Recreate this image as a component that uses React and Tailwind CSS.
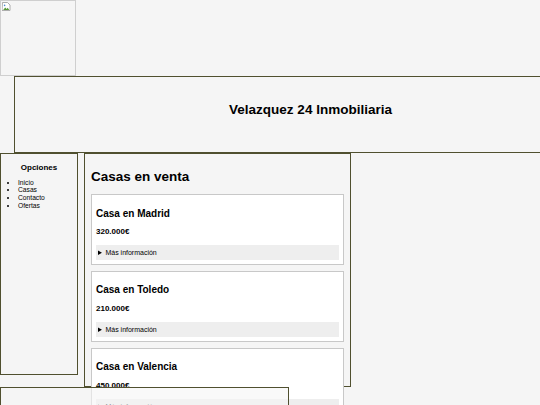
const casas = [
	{ nombre: "Casa en Madrid", precio: "320.000€" },
	{ nombre: "Casa en Toledo", precio: "210.000€" },
	{ nombre: "Casa en Valencia", precio: "450.000€" },
];

const BrokenImage = () => (
	<div className="w-[76px] h-[76px] border border-[#cfcfcf] p-[1px]">
		<svg width="9" height="9" viewBox="0 0 9 9">
			<path d="M0.5 0.5h5l2.5 2.5v5.5h-8z" fill="#fff" stroke="#9a9a9a" strokeWidth="0.8" />
			<path d="M1.2 8l2-2.6 1.5 1.6 1-1.2 1.6 2.2z" fill="#5a9a3a" />
			<circle cx="2.6" cy="3.4" r="0.8" fill="#4a8ad0" />
		</svg>
	</div>
);

const Casa = ({ nombre, precio }) => (
	<div className="bg-white border border-[#c8c8c8] px-[4px] pt-[12.7px] pb-[3.5px]">
		<h3 className="text-[10px] leading-[11.5px] font-bold text-black">{nombre}</h3>
		<p className="mt-[8px] text-[8px] leading-[9.2px] font-bold text-black">{precio}</p>
		<details className="mt-[9px] bg-[#eeeeee] h-[15px]">
			<summary className="text-[7px] leading-[15px] pl-[2px] text-black cursor-pointer">
				Más información
			</summary>
		</details>
	</div>
);

export default function App() {
	return (
		<div
			className="h-[405px] w-[540px] overflow-hidden bg-[#f5f5f5] text-black"
			style={{ fontFamily: '"Liberation Sans", Arial, sans-serif' }}>
			<BrokenImage />

			<header className="ml-[14px] w-[593px] h-[77px] border border-[#50502f] flex items-center justify-center pb-[10px]">
				<h1 className="text-[13.5px] leading-[15.5px] font-bold text-black">
					Velazquez 24 Inmobiliaria
				</h1>
			</header>

			<div className="flex items-start">
				<aside className="w-[78px] h-[222px] border border-[#50502f] pt-[8.5px]">
					<h2 className="text-center text-[8px] leading-[9.2px] font-bold text-black">Opciones</h2>
					<ul className="mt-[7px] list-disc pl-[17px] text-[6.7px] leading-[7.7px] text-black">
						<li>Inicio</li>
						<li>Casas</li>
						<li>Contacto</li>
						<li>Ofertas</li>
					</ul>
				</aside>

				<main className="ml-[6px] w-[267px] h-[234px] border border-[#50502f] px-[6px] pt-[15.4px]">
					<h2 className="text-[13.5px] leading-[15.5px] font-bold text-black">Casas en venta</h2>
					<div className="mt-[9px] flex flex-col gap-[6px]">
						{casas.map((c) => (
							<Casa key={c.nombre} {...c} />
						))}
					</div>
				</main>
			</div>

			{/* el pie queda por encima de la tarjeta que se sale */}
			<footer className="relative w-[289px] h-[60px] border border-[#50502f] bg-[#f5f5f5]/60" />
		</div>
	);
}
